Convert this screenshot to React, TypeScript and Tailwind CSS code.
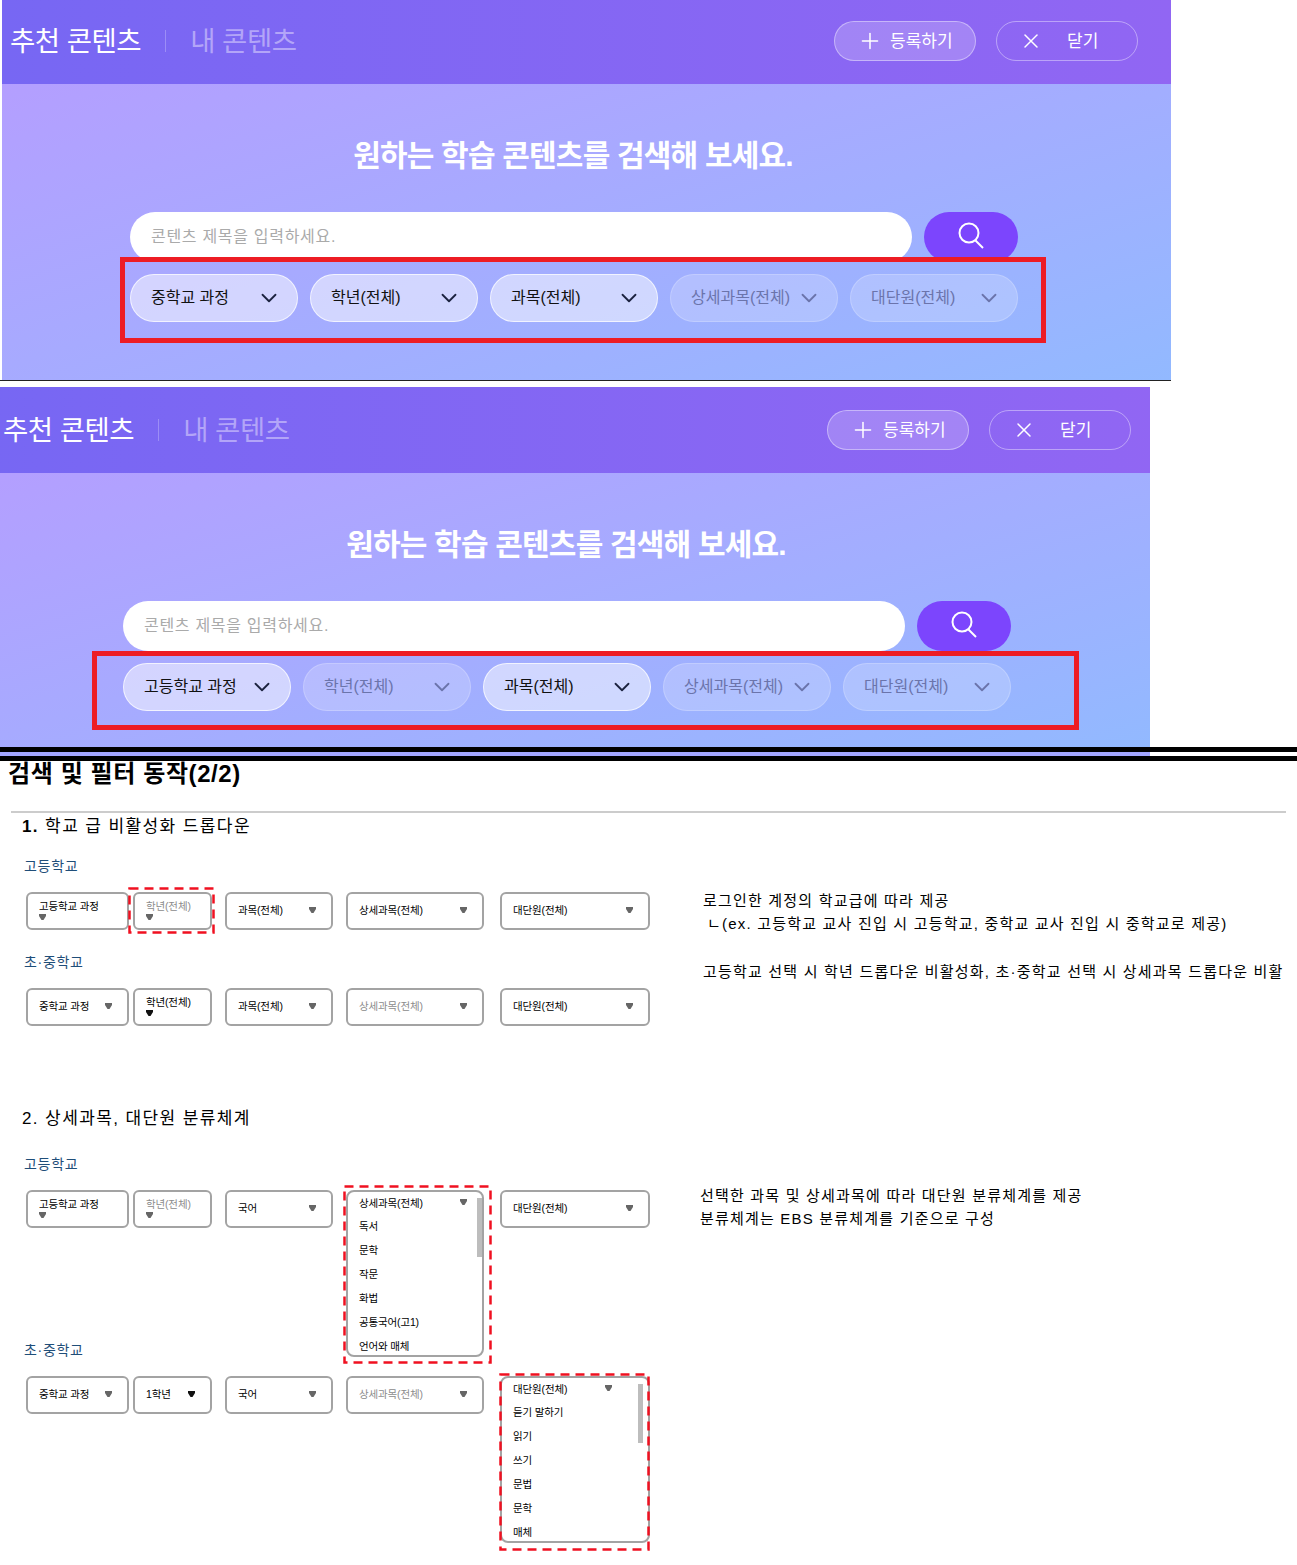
import { ChevronDown, Plus, X } from 'lucide-react';

const KR = "font-['Liberation_Sans','Noto_Sans_CJK_KR',sans-serif]";

interface FilterItem {
  label: string;
  active: boolean;
}

interface HeroProps {
  outerClass: string;
  innerClass: string;
  redClass: string;
  filters: FilterItem[];
}

function Hero({ outerClass, innerClass, redClass, filters }: HeroProps) {
  return (
    <div className={`relative overflow-hidden bg-linear-to-br from-[#b79bff] to-[#92b9ff] ${outerClass}`}>
      <div className={`w-[1169px] ${innerClass}`}>
        {/* Header */}
        <div className="flex h-[86px] items-center bg-linear-to-r from-[#7767f3] to-[#9166f3] pl-[8px] pr-[33px]">
          <span className="pt-[2px] text-[27.5px] tracking-[-0.5px] text-white">추천 콘텐츠</span>
          <span className="mx-[24px] h-[22px] w-px bg-white/25" />
          <span className="pt-[2px] text-[27.5px] tracking-[-0.5px] text-[#b3a5f8]">내 콘텐츠</span>
          <button className="ml-auto flex h-[40px] w-[142px] items-center gap-[7px] rounded-[20px] border border-white/40 bg-white/20 pl-[22px] text-[17px] text-white">
            <Plus size={26} strokeWidth={1.4} />
            <span className="pt-[2px]">등록하기</span>
          </button>
          <button className="ml-[20px] flex h-[40px] w-[142px] items-center gap-[24px] rounded-[20px] border border-white/40 pl-[22px] text-[17px] text-white">
            <X size={24} strokeWidth={1.5} />
            <span className="pt-[2px]">닫기</span>
          </button>
        </div>

        <h2 className="mt-[52px] pr-[27px] text-center text-[30px] leading-[40px] font-bold tracking-[-0.8px] text-white">
          원하는 학습 콘텐츠를 검색해 보세요.
        </h2>

        {/* Search */}
        <div className="mt-[36px] ml-[128px] flex w-[888px] gap-[12px]">
          <input
            placeholder="콘텐츠 제목을 입력하세요."
            className="h-[50px] flex-1 rounded-[25px] bg-white px-[21px] text-[16px] tracking-[0.7px] outline-none placeholder:text-[#aaaaaa]"
          />
          <button className="flex h-[50px] w-[94px] items-center justify-center rounded-[25px] bg-[#7c45fd] text-white">
            <svg width="27" height="27" viewBox="0 0 27 27" fill="none" stroke="currentColor" strokeWidth="2" className="mb-[3px]">
              <circle cx="11" cy="11" r="9.5" />
              <path d="M17.5 18.5L25 26" />
            </svg>
          </button>
        </div>

        {/* Filters */}
        <div className="mt-[12px] ml-[128px] flex w-[888px] gap-[12px]">
          {filters.map((f) => (
            <div
              key={f.label}
              className={`flex h-[48px] w-[168px] items-center justify-between rounded-[24px] border pr-[15px] pl-[20px] text-[16px] ${
                f.active
                  ? 'border-white/70 bg-white/50 text-[#111111]'
                  : 'border-white/20 bg-white/20 text-[#6b74ab]'
              }`}
            >
              <span className="whitespace-nowrap">{f.label}</span>
              <ChevronDown size={26} strokeWidth={1.7} className={f.active ? 'text-[#1c2340]' : 'text-[#6b74ab]'} />
            </div>
          ))}
        </div>
      </div>
      <div className={`absolute border-[5px] border-[#ed1c24] ${redClass}`} />
    </div>
  );
}

function Arrow({ dark }: { dark?: boolean }) {
  return (
    <svg width="7" height="6" viewBox="0 0 7 6" className="shrink-0">
      <path d="M0 0H7V2L4.5 6H2.5L0 2Z" fill={dark ? '#111111' : '#666666'} />
    </svg>
  );
}

function Dashed({ w, h, className }: { w: number; h: number; className: string }) {
  return (
    <svg width={w} height={h} className={`pointer-events-none absolute z-20 ${className}`}>
      <rect x="1.5" y="1.5" width={w - 3} height={h - 3} fill="none" stroke="#f01020" strokeWidth="2.5" strokeDasharray="9 6" />
    </svg>
  );
}

interface SelectProps {
  label: string;
  widthClass: string;
  dim?: boolean;
  stack?: boolean;
  darkArrow?: boolean;
  open?: boolean;
  children?: React.ReactNode;
}

function Select({ label, widthClass, dim, stack, darkArrow, open, children }: SelectProps) {
  return (
    <div className={`relative h-[38px] shrink-0 ${widthClass}`}>
      {!open && (
        <div
          className={`flex h-full rounded-[6px] border-2 border-[#a3a3a3] bg-white pl-[11px] text-[10.5px] leading-[12px] tracking-[-0.15px] ${
            dim ? 'text-[#8c8c8c]' : 'text-black'
          } ${stack ? 'flex-col justify-center gap-[2px] pb-[3px]' : 'items-center justify-between pr-[15px] pb-[2px]'}`}
        >
          <span className="whitespace-nowrap">{label}</span>
          <Arrow dark={darkArrow} />
        </div>
      )}
      {children}
    </div>
  );
}

function OpenList({ label, items, arrowClass, barClass }: { label: string; items: string[]; arrowClass: string; barClass: string }) {
  return (
    <div className="absolute top-0 left-0 z-10 h-[167px] w-full overflow-hidden rounded-[8px] border-2 border-[#a3a3a3] bg-white pl-[11px] text-[10.5px] leading-[24px] tracking-[-0.15px] text-black">
      <div className="relative h-[22px] leading-[22px]">
        {label}
        <span className={`absolute top-[7px] ${arrowClass}`}>
          <Arrow />
        </span>
      </div>
      {items.map((item) => (
        <div key={item} className="whitespace-nowrap">
          {item}
        </div>
      ))}
      <div className={`absolute top-[6px] h-[59px] w-[5px] bg-[#bdbdbd] ${barClass}`} />
    </div>
  );
}

const Label = ({ children }: { children: React.ReactNode }) => (
  <div className="pl-[24px] text-[14px] leading-[20px] tracking-[0.7px] text-[#1f4e79]">{children}</div>
);

const Heading = ({ children, className }: { children: React.ReactNode; className: string }) => (
  <div className={`pl-[22px] text-[17px] leading-[24px] tracking-[1.4px] text-black ${className}`}>{children}</div>
);

export default function App() {
  return (
    <div className={`h-[1565px] w-[1297px] overflow-hidden bg-white ${KR}`}>
      <Hero
        outerClass="ml-[2px] h-[380px] w-[1169px]"
        innerClass="-mt-[2px]"
        redClass="top-[257px] left-[118px] h-[86px] w-[926px]"
        filters={[
          { label: '중학교 과정', active: true },
          { label: '학년(전체)', active: true },
          { label: '과목(전체)', active: true },
          { label: '상세과목(전체)', active: false },
          { label: '대단원(전체)', active: false },
        ]}
      />
      <div className="h-px w-[1171px] bg-[#222222]" />
      <div className="h-[6px]" />
      <Hero
        outerClass="h-[360px] w-[1150px]"
        innerClass="-ml-[5px]"
        redClass="top-[264px] left-[92px] h-[79px] w-[987px]"
        filters={[
          { label: '고등학교 과정', active: true },
          { label: '학년(전체)', active: false },
          { label: '과목(전체)', active: true },
          { label: '상세과목(전체)', active: false },
          { label: '대단원(전체)', active: false },
        ]}
      />
      <div className="h-[5px] bg-black" />
      <div className="h-[4px] w-[1150px] bg-[#a3a6ff]" />
      <div className="h-[5px] bg-black" />

      <div className="pt-[1px] pl-[8px] text-[24px] leading-[24px] font-bold tracking-[0.6px] text-black">검색 및 필터 동작(2/2)</div>
      <div className="mt-[25px] ml-[11px] h-[2px] w-[1275px] bg-[#cccccc]" />

      <Heading className="pt-[2px]"><b>1.</b> 학교 급 비활성화 드롭다운</Heading>

      <div className="mt-[17px] flex">
        <div className="w-[703px]">
          <Label>고등학교</Label>
          <div className="mt-[16px] flex pl-[26px]">
            <Select label="고등학교 과정" widthClass="w-[103px]" stack />
            <div className="ml-[4px]">
              <Select label="학년(전체)" widthClass="w-[79px]" dim stack>
                <Dashed w={87} h={47} className="-top-[5px] -left-[5px]" />
              </Select>
            </div>
            <div className="ml-[13px]">
              <Select label="과목(전체)" widthClass="w-[108px]" />
            </div>
            <div className="ml-[13px]">
              <Select label="상세과목(전체)" widthClass="w-[138px]" />
            </div>
            <div className="ml-[16px]">
              <Select label="대단원(전체)" widthClass="w-[150px]" />
            </div>
          </div>
          <div className="mt-[22px]">
            <Label>초·중학교</Label>
          </div>
          <div className="mt-[16px] flex pl-[26px]">
            <Select label="중학교 과정" widthClass="w-[103px]" />
            <div className="ml-[4px]">
              <Select label="학년(전체)" widthClass="w-[79px]" stack darkArrow />
            </div>
            <div className="ml-[13px]">
              <Select label="과목(전체)" widthClass="w-[108px]" />
            </div>
            <div className="ml-[13px]">
              <Select label="상세과목(전체)" widthClass="w-[138px]" dim />
            </div>
            <div className="ml-[16px]">
              <Select label="대단원(전체)" widthClass="w-[150px]" />
            </div>
          </div>
        </div>
        <div className="pt-[33px] text-[15px] leading-[23px] tracking-[1.2px] whitespace-nowrap text-black">
          <div>로그인한 계정의 학교급에 따라 제공</div>
          <div className="pl-[4px]">ㄴ(ex. 고등학교 교사 진입 시 고등학교, 중학교 교사 진입 시 중학교로 제공)</div>
          <div className="mt-[25px]">고등학교 선택 시 학년 드롭다운 비활성화, 초·중학교 선택 시 상세과목 드롭다운 비활</div>
        </div>
      </div>

      <Heading className="mt-[79px] pt-[2px]">2. 상세과목, 대단원 분류체계</Heading>

      <div className="mt-[23px] flex">
        <div className="w-[700px]">
          <Label>고등학교</Label>
          <div className="mt-[16px] flex pl-[26px]">
            <Select label="고등학교 과정" widthClass="w-[103px]" stack />
            <div className="ml-[4px]">
              <Select label="학년(전체)" widthClass="w-[79px]" dim stack />
            </div>
            <div className="ml-[13px]">
              <Select label="국어" widthClass="w-[108px]" />
            </div>
            <div className="ml-[13px]">
              <Select label="상세과목(전체)" widthClass="w-[138px]" open>
                <OpenList
                  label="상세과목(전체)"
                  items={['독서', '문학', '작문', '화법', '공통국어(고1)', '언어와 매체']}
                  arrowClass="right-[15px]"
                  barClass="right-0"
                />
                <Dashed w={149} h={179} className="-top-[5px] -left-[3px]" />
              </Select>
            </div>
            <div className="ml-[16px]">
              <Select label="대단원(전체)" widthClass="w-[150px]" />
            </div>
          </div>
          <div className="mt-[112px]">
            <Label>초·중학교</Label>
          </div>
          <div className="mt-[16px] flex pl-[26px]">
            <Select label="중학교 과정" widthClass="w-[103px]" />
            <div className="ml-[4px]">
              <Select label="1학년" widthClass="w-[79px]" darkArrow />
            </div>
            <div className="ml-[13px]">
              <Select label="국어" widthClass="w-[108px]" />
            </div>
            <div className="ml-[13px]">
              <Select label="상세과목(전체)" widthClass="w-[138px]" dim />
            </div>
            <div className="ml-[16px]">
              <Select label="대단원(전체)" widthClass="w-[150px]" open>
                <OpenList
                  label="대단원(전체)"
                  items={['듣기 말하기', '읽기', '쓰기', '문법', '문학', '매체']}
                  arrowClass="right-[36px]"
                  barClass="right-[5px]"
                />
                <Dashed w={151} h={178} className="-top-[3px] -left-[1px]" />
              </Select>
            </div>
          </div>
        </div>
        <div className="pt-[30px] text-[15px] leading-[23px] tracking-[1.2px] whitespace-nowrap text-black">
          <div>선택한 과목 및 상세과목에 따라 대단원 분류체계를 제공</div>
          <div>분류체계는 EBS 분류체계를 기준으로 구성</div>
        </div>
      </div>
    </div>
  );
}
